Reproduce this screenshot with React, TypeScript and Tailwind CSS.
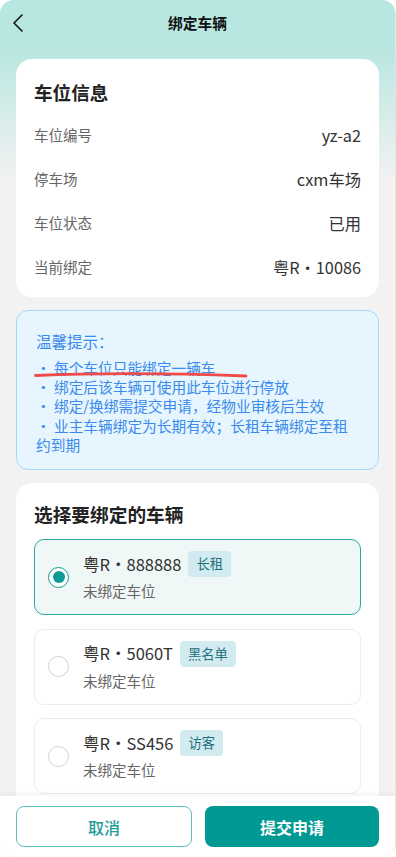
import React from "react";

const font = { fontFamily: '"Noto Sans CJK SC", "Noto Sans", sans-serif' };

function Row({ label, value }: { label: string; value: string }) {
  return (
    <div className="flex h-[44px] items-center justify-between">
      <span className="text-[14.5px] text-[#666666]">{label}</span>
      <span className="text-[16.3px] text-[#333333]">{value}</span>
    </div>
  );
}

function Option({
  plate,
  tag,
  selected,
}: {
  plate: string;
  tag: string;
  selected?: boolean;
}) {
  return (
    <div
      className={
        selected
          ? "flex h-[76px] items-center gap-[14px] rounded-[10px] border border-[#2aa9a2] bg-[#f0f8f7] pl-[13px]"
          : "flex h-[76px] items-center gap-[14px] rounded-[10px] border border-[#ececec] bg-white pl-[13px]"
      }
    >
      {selected ? (
        <div className="flex h-[21px] w-[21px] items-center justify-center rounded-full border-[1.5px] border-[#0e9a94] bg-white">
          <div className="h-[12px] w-[12px] rounded-full bg-[#0e9a94]" />
        </div>
      ) : (
        <div className="h-[21px] w-[21px] rounded-full border-[1.5px] border-[#d0d0d0] bg-white" />
      )}
      <div className="flex flex-col">
        <div className="flex h-[26px] items-center gap-[7px]">
          <span className="text-[16.5px] text-[#333333]">{plate}</span>
          <span className="flex h-[26px] items-center rounded-[4px] bg-[#d2ebf1] px-[8px] text-[13.3px] text-[#1e6f7c]">
            {tag}
          </span>
        </div>
        <span className="mt-[2px] text-[14.5px] leading-[24px] text-[#666666]">未绑定车位</span>
      </div>
    </div>
  );
}

export default function App() {
  return (
    <div
      style={font}
      className="relative flex h-[857px] w-[396px] flex-col overflow-hidden rounded-[14px] border-r border-[#e6e6e6] bg-[linear-gradient(180deg,#b8e6e0_0px,#b8e6e0_45px,#f2f2f2_180px,#f2f2f2_100%)]"
    >
      {/* Header */}
      <div className="relative flex h-[46px] shrink-0 items-center justify-center">
        <svg
          className="absolute left-[12px] top-[14px]"
          width="12"
          height="18"
          viewBox="0 0 12 18"
          fill="none"
        >
          <polyline points="10,1 2,9 10,17" stroke="#111" strokeWidth="1.6" strokeLinecap="round" strokeLinejoin="round" />
        </svg>
        <span className="text-[14.7px] font-bold text-[#111111]">绑定车辆</span>
      </div>

      {/* Content */}
      <div className="flex min-h-0 flex-1 flex-col gap-[13px] overflow-hidden px-[16px] pt-[13px]">
        {/* Card 1 */}
        <div className="shrink-0 rounded-[16px] bg-white px-[18px] pb-[8px] pt-[20px]">
          <div className="mb-[8px] text-[18.6px] font-bold leading-[26px] text-[#222222]">车位信息</div>
          <Row label="车位编号" value="yz-a2" />
          <Row label="停车场" value="cxm车场" />
          <Row label="车位状态" value="已用" />
          <Row label="当前绑定" value="粤R・10086" />
        </div>

        {/* Tip */}
        <div className="relative shrink-0 rounded-[12px] border border-[#a6d7f7] bg-[#e6f5fe] pb-[15px] pl-[19px] pr-[24px] pt-[19px] text-[#3a8bec]">
          <div className="text-[15.5px] leading-[22px]">温馨提示：</div>
          <div className="mt-[6px] text-[14.7px] leading-[19.2px]">
            <div>・ 每个车位只能绑定一辆车</div>
            <div>・ 绑定后该车辆可使用此车位进行停放</div>
            <div>・ 绑定/换绑需提交申请，经物业审核后生效</div>
            <div>・ 业主车辆绑定为长期有效；长租车辆绑定至租约到期</div>
          </div>
          <svg
            className="absolute left-[17px] top-[59px]"
            width="214"
            height="10"
            viewBox="0 0 214 10"
            fill="none"
          >
            <path d="M1.5 5.5 C 50 3.5, 120 2.5, 212 6" stroke="#f04a4a" strokeWidth="2.8" strokeLinecap="round" />
          </svg>
        </div>

        {/* Card 2 */}
        <div className="shrink-0 rounded-[16px] bg-white px-[18px] pb-[16px] pt-[18px]">
          <div className="mb-[12px] text-[18.7px] font-bold leading-[26px] text-[#222222]">选择要绑定的车辆</div>
          <div className="flex flex-col gap-[13.5px]">
            <Option plate="粤R・888888" tag="长租" selected />
            <Option plate="粤R・5060T" tag="黑名单" />
            <Option plate="粤R・SS456" tag="访客" />
          </div>
        </div>
      </div>

      {/* Bottom bar */}
      <div className="flex h-[61px] shrink-0 gap-[13px] bg-white px-[16px] pt-[10px] shadow-[0_-2px_6px_rgba(0,0,0,0.05)]">
        <button className="flex h-[41px] flex-1 items-center justify-center rounded-[8px] border border-[#5cc0bc] bg-white text-[16px] font-medium text-[#1f9c96]">
          取消
        </button>
        <button className="flex h-[41px] flex-1 items-center justify-center rounded-[8px] bg-[#009994] text-[16px] font-bold text-white">
          提交申请
        </button>
      </div>
    </div>
  );
}
